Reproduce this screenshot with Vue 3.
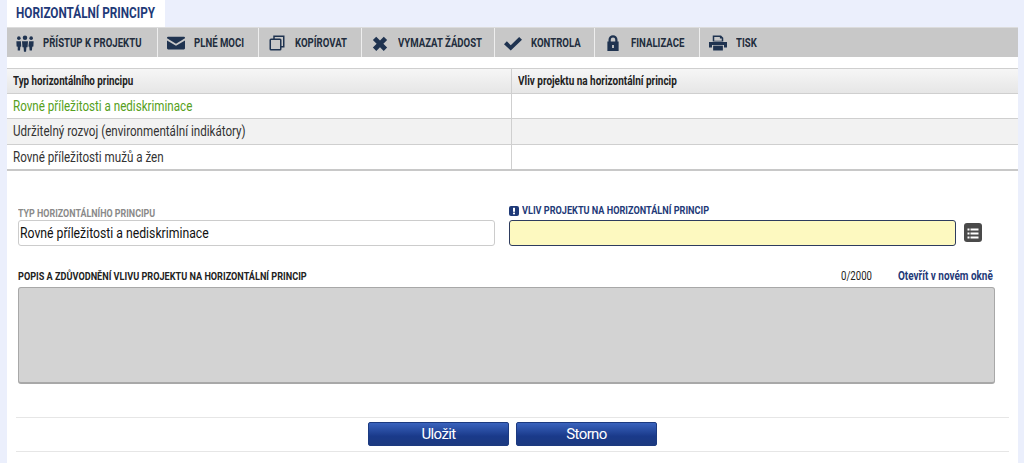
<template>
  <div class="page">
    <div class="tab-row">
      <div class="tab"><span class="nar">HORIZONTÁLNÍ PRINCIPY</span></div>
    </div>
    <div class="panel">
      <div class="toolbar">
        <button v-for="item in tools" :key="item.label" class="tool" :style="{ width: item.width + 'px' }">
          <svg class="tool-icon" viewBox="0 0 24 24" v-html="item.icon"></svg>
          <span class="nar">{{ item.label }}</span>
        </button>
      </div>

      <div class="grid">
        <div class="grid-row grid-head">
          <div class="cell"><span class="nar">Typ horizontálního principu</span></div>
          <div class="cell"><span class="nar">Vliv projektu na horizontální princip</span></div>
        </div>
        <div
          v-for="row, idx in rows"
          :key="idx"
          class="grid-row"
          :class="{ odd: idx === 1, active: idx === 0 }"
        >
          <div class="cell"><span class="nar">{{ row }}</span></div>
          <div class="cell"></div>
        </div>
      </div>

      <div class="form">
        <div class="form-top">
          <div class="field left-field">
            <label class="muted"><span class="nar">TYP HORIZONTÁLNÍHO PRINCIPU</span></label>
            <div class="input"><span class="nar">Rovné příležitosti a nediskriminace</span></div>
          </div>
          <div class="field right-field">
            <label class="required">
              <svg class="req-icon" viewBox="0 0 10 10">
                <rect width="10" height="10" rx="2" fill="#1f3a78" />
                <rect x="4" y="1.8" width="2" height="4" fill="#fff" />
                <rect x="4" y="6.6" width="2" height="1.7" fill="#fff" />
              </svg>
              <span class="nar">VLIV PROJEKTU NA HORIZONTÁLNÍ PRINCIP</span>
            </label>
            <div class="input yellow"></div>
          </div>
          <button class="list-btn">
            <svg viewBox="0 0 18 18" width="18" height="18">
              <g fill="#fff">
                <rect x="3.5" y="4.500" width="2" height="2" />
                <rect x="6.500" y="4.500" width="8" height="2" />
                <rect x="3.5" y="8.500" width="2" height="2" />
                <rect x="6.500" y="8.500" width="8" height="2" />
                <rect x="3.5" y="12.500" width="2" height="2" />
                <rect x="6.500" y="12.500" width="8" height="2" />
              </g>
            </svg>
          </button>
        </div>

        <div class="desc-head">
          <label class="desc-label"><span class="nar">POPIS A ZDŮVODNĚNÍ VLIVU PROJEKTU NA HORIZONTÁLNÍ PRINCIP</span></label>
          <span class="count"><span class="nar">0/2000</span></span>
          <a class="open-link"><span class="nar">Otevřít v novém okně</span></a>
        </div>
        <div class="textarea"></div>
      </div>

      <div class="actions">
        <button class="btn">Uložit</button>
        <button class="btn">Storno</button>
      </div>
    </div>
  </div>
</template>

<script setup>
const color = '#1f3350';

const tools = [
  {
    label: 'PŘÍSTUP K PROJEKTU',
    width: 151,
    icon: `<g fill="${color}"><circle cx="12" cy="5" r="3"/><path d="M8 9.500h8l-.6 8h-1.500l-.5 6h-2.800l-.5-6H8.600z"/><circle cx="3.800" cy="5.500" r="2.400"/><path d="M.5 9.500h6l.5 7-1.200.5-.5 5h-3L2.300 17 .8 16.500z"/><circle cx="20.200" cy="5.500" r="2.400"/><path d="M17.500 9.500h6l-.3 7-1.500.5-.5 5h-3l-.5-5-1.200-.5z"/></g>`
  },
  {
    label: 'PLNÉ MOCI',
    width: 101,
    icon: `<path fill="${color}" d="M0 5q0-1.500 1.500-1.500h21Q24 3.500 24 5v.8L12 13 0 5.800zM0 8.500l12 7 12-7V19q0 1.500-1.500 1.500h-21Q0 20.500 0 19z"/>`
  },
  {
    label: 'KOPÍROVAT',
    width: 103,
    icon: `<g fill="none" stroke="${color}" stroke-width="2"><path d="M8 7V3h13v14h-4"/><rect x="3" y="7" width="14" height="14" rx="1"/></g>`
  },
  {
    label: 'VYMAZAT ŽÁDOST',
    width: 133,
    icon: `<path fill="${color}" d="M7 3.500 12 8.500 17 3.500 21.500 8 16.500 13 21.500 18 17 22.500 12 17.500 7 22.500 2.500 18 7.500 13 2.500 8z"/>`
  },
  {
    label: 'KONTROLA',
    width: 100,
    icon: `<path fill="${color}" d="M0 13.500 3.800 9.700l5.200 5.200L20.200 4 24 7.800 9 22z"/>`
  },
  {
    label: 'FINALIZACE',
    width: 105,
    icon: `<path fill="${color}" fill-rule="evenodd" d="M6 10V7.500a6 6 0 0 1 12 0V10h1.500v12.500h-15V10zM9 10h6V7.500a3 3 0 0 0-6 0zm1.800 4.500v4h2.400v-4z"/>`
  },
  {
    label: 'TISK',
    width: 90,
    icon: `<g fill="${color}"><path fill-rule="evenodd" d="M5 2h11l3 3v5H5zM7 4v5h10V6h-2.500V4z"/><path d="M0 10.500h24V18h-4v-3.500H4V18H0z"/><path d="M5.500 15.500h13V22h-13z"/></g>`
  }
];

const rows = [
  'Rovné příležitosti a nediskriminace',
  'Udržitelný rozvoj (environmentální indikátory)',
  'Rovné příležitosti mužů a žen'
];
</script>

<style>
html, body {
  margin: 0;
  background: #ebeffc;
}
</style>

<style scoped>
.page {
  width: 1024px;
  height: 463px;
  overflow: hidden;
  box-sizing: border-box;
  padding: 0 6px 0 7px;
  font-family: Roboto, "Liberation Sans", sans-serif;
  color: #222;
}

.nar {
  display: inline-block;
  transform: scaleX(0.83);
  transform-origin: left center;
  white-space: nowrap;
}

.tab-row {
  height: 27px;
}

.tab {
  width: 158px;
  height: 27px;
  box-sizing: border-box;
  padding: 4px 0 0 9px;
  background: #fff;
  color: #1f3a78;
  font-size: 14px;
  line-height: 19px;
  font-weight: 700;
}

.tab .nar {
  transform: scaleX(0.84);
}

.panel {
  background: #fff;
  height: 436px;
}

.toolbar {
  display: flex;
  height: 30px;
  background: #c8c8c8;
  border-top: 1px solid #dcdcdc;
  box-sizing: border-box;
}

.tool {
  display: flex;
  align-items: center;
  box-sizing: border-box;
  height: 29px;
  padding: 0 0 0 9px;
  border: 0;
  border-right: 1px solid #eee;
  background: none;
  font: 700 12px Roboto, sans-serif;
  color: #222d3d;
  text-align: left;
}

.tool:last-child {
  border-right: 0;
}

.tool .nar {
  transform: scaleX(0.8);
}

.tool-icon {
  width: 18px;
  height: 18px;
  margin-right: 9px;
  flex: none;
}

.grid {
  margin-top: 11px;
  border-top: 1px solid #cfcfcf;
  border-bottom: 2px solid #c8c8c8;
}

.grid-row {
  display: grid;
  grid-template-columns: 504px 1fr;
  box-sizing: border-box;
  height: 25px;
  border-top: 1px solid #cfcfcf;
  font-size: 14px;
  line-height: 24px;
  color: #333;
}

.grid-head {
  height: 24px;
  border-top: 0;
  background: linear-gradient(#f6f6f6, #e6e6e6);
  font-weight: 700;
  font-size: 12px;
  color: #222;
}

.grid-head .nar {
  transform: scaleX(0.815);
}

.grid-head .cell + .cell .nar {
  transform: scaleX(0.83);
}

.grid-row.odd {
  height: 26px;
  background: #f2f2f2;
}

.grid-row.active {
  color: #55a020;
}

.cell {
  padding-left: 6px;
  overflow: hidden;
  white-space: nowrap;
}

.cell + .cell {
  border-left: 1px solid #cfcfcf;
}

.form {
  padding: 0 11px;
}

.form-top {
  display: flex;
  align-items: flex-end;
  height: 75px;
}

.field label {
  display: block;
  font-size: 11px;
  line-height: 13px;
  font-weight: 700;
}

.left-field {
  width: 477px;
  margin-right: 14px;
}

.left-field .nar {
  transform: scaleX(0.81);
}

.muted {
  color: #8a8a8a;
}

.right-field {
  width: 447px;
  margin-right: 8px;
}

.right-field label {
  display: flex;
  align-items: center;
  margin-bottom: 3px;
  color: #1f3a78;
}

.req-icon {
  width: 10px;
  height: 10px;
  margin-right: 3px;
  flex: none;
}

.input {
  box-sizing: border-box;
  height: 26px;
  padding-left: 1px;
  border: 1px solid #ccc;
  border-radius: 3px;
  font-size: 15px;
  line-height: 25px;
  color: #111;
}

.input.yellow {
  background: #fdf9c0;
  border-color: #2e3c5e;
}

.left-field .input .nar {
  transform: scaleX(0.815);
}

.list-btn {
  width: 18px;
  height: 19px;
  margin-bottom: 4px;
  padding: 0;
  border: 0;
  border-radius: 3px;
  background: #4a4a4a;
  display: flex;
  align-items: center;
  justify-content: center;
}

.desc-head {
  display: flex;
  align-items: center;
  height: 13px;
  margin-top: 24px;
  width: 977px;
  font-size: 11px;
  line-height: 13px;
  font-weight: 700;
  color: #222;
}

.desc-label {
  margin-right: auto;
}

.count {
  width: 57px;
  font-weight: 400;
  font-size: 12px;
}

.count .nar {
  transform: scaleX(0.8);
}

.open-link {
  color: #1f3a78;
  width: 97px;
  white-space: nowrap;
  font-size: 12px;
}

.textarea {
  box-sizing: border-box;
  width: 977px;
  height: 97px;
  margin-top: 4px;
  background: #d3d3d3;
  border: 1px solid #a8a8a8;
  border-bottom-width: 2px;
  border-radius: 3px;
}

.actions {
  display: flex;
  justify-content: center;
  gap: 7px;
  box-sizing: border-box;
  width: 993px;
  height: 35px;
  margin: 33px 0 0 9px;
  padding: 4px 0 0 0;
  border-top: 1px solid #e6e6e6;
  border-bottom: 1px solid #e6e6e6;
}

.btn {
  width: 141px;
  height: 24px;
  padding: 1px 0 0;
  border: 1px solid #1c3a80;
  border-radius: 2px;
  background: linear-gradient(#3a63bd, #1a3a8a 60%, #1c3a80);
  color: #fff;
  font: 400 15px/21px Roboto, sans-serif;
  letter-spacing: -0.6px;
}
</style>
